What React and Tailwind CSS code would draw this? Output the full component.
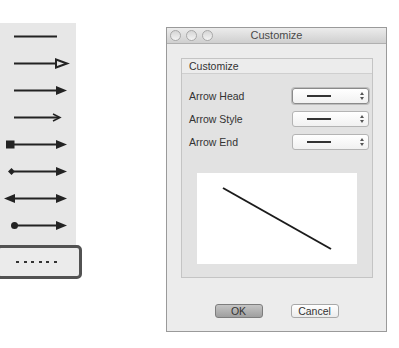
import { Fragment } from 'react'

const ink = '#232323'

function Head({ kind }) {
  if (kind === 'hollow') return <polygon points="56,27.5 67,31.5 56,35.5" fill="none" stroke={ink} strokeWidth="2" />
  if (kind === 'open') return <polyline points="53,28 60,31.5 53,35" fill="none" stroke={ink} strokeWidth="1.5" />
  if (kind === 'filled') return <polygon points="56,27 67,31.5 56,36" fill={ink} />
  return null
}

function ArrowRow({ head, tail, end = 57 }) {
  return (
    <svg width="76" height="27" viewBox="0 18 76 27" className="block">
      <line x1="14" y1="31.5" x2={end} y2="31.5" stroke={ink} strokeWidth="2" />
      <Head kind={head} />
      {tail === 'square' && <rect x="6" y="27.5" width="8.5" height="8" fill={ink} />}
      {tail === 'diamond' && <polygon points="11.5,28 15,31.5 11.5,35 8,31.5" fill={ink} />}
      {tail === 'arrow' && <polygon points="15,27 4,31.5 15,36" fill={ink} />}
      {tail === 'dot' && <circle cx="14.5" cy="31.5" r="3.5" fill={ink} />}
    </svg>
  )
}

const rows = [
  { end: 57 },
  { head: 'hollow', end: 56 },
  { head: 'filled', end: 58 },
  { head: 'open', end: 59 },
  { head: 'filled', tail: 'square', end: 58 },
  { head: 'filled', tail: 'diamond', end: 58 },
  { head: 'filled', tail: 'arrow', end: 58 },
  { head: 'filled', tail: 'dot', end: 58 },
]

function Picker({ focused }) {
  return (
    <div
      className={
        'flex h-[16px] w-[77px] items-center rounded-[3px] border bg-gradient-to-b from-white to-[#f1f1f1] ' +
        (focused ? 'border-[#8a8a8a] shadow-[0_0_0_1px_#bdbdbd]' : 'border-[#b4b4b4]')
      }
    >
      <span className="ml-[14px] h-[1.5px] w-[24px] bg-[#333]" />
      <span className="ml-auto mr-[4px] flex flex-col items-center gap-[2px]">
        <span className="h-0 w-0 border-x-[2px] border-b-[3px] border-x-transparent border-b-[#555]" />
        <span className="h-0 w-0 border-x-[2px] border-t-[3px] border-x-transparent border-t-[#555]" />
      </span>
    </div>
  )
}

export default function App() {
  return (
    <div className="flex h-[348px] w-[399px] bg-white font-['Liberation_Sans',sans-serif] text-[#333]">
      <div className="mt-[23px] w-[82px]">
        <div className="w-[76px] bg-[#e7e7e7] pb-[8px]">
          {rows.map((r, i) => (
            <Fragment key={i}>
              <ArrowRow {...r} />
            </Fragment>
          ))}
        </div>
        <div className="-ml-[4px] -mt-[2px] flex h-[34px] w-[86px] items-center rounded-[5px] border-[3px] border-[#525252] bg-[#ebebeb] pl-[17px]">
          <div className="flex gap-[4.5px]">
            {[0, 1, 2, 3, 4, 5].map((d) => (
              <span key={d} className="h-[2px] w-[3px] bg-[#333]" />
            ))}
          </div>
        </div>
      </div>

      <div className="ml-[84px] mt-[27px] flex h-[305px] w-[221px] flex-col border border-[#9a9a9a] bg-[#ececec]">
        <div className="relative flex h-[16px] items-center justify-center border-b border-[#b0b0b0] bg-gradient-to-b from-[#ececec] to-[#cfcfcf]">
          <div className="absolute left-[3px] top-[2px] flex gap-[5px]">
            {[0, 1, 2].map((c) => (
              <span key={c} className="h-[11px] w-[11px] rounded-full border border-[#a8a8a8] bg-gradient-to-b from-[#d5d5d5] to-[#f4f4f4]" />
            ))}
          </div>
          <span className="text-[11px] text-[#4a4a4a]">Customize</span>
        </div>

        <div className="ml-[14px] mr-[13px] mt-[14px] flex h-[220px] flex-col border border-[#c4c4c4] bg-[#e2e2e2]">
          <div className="flex h-[15px] items-center border-b border-[#cfcfcf] bg-[#ececec] pl-[7px] text-[10.5px] leading-none">
            Customize
          </div>
          <div className="mt-[14px] flex flex-col gap-[7px] pl-[7px] pr-[3px]">
            {['Arrow Head', 'Arrow Style', 'Arrow End'].map((l, i) => (
              <div key={l} className="flex items-center justify-between">
                <span className="text-[10.5px] leading-none">{l}</span>
                <Picker focused={i === 0} />
              </div>
            ))}
          </div>
          <div className="mx-auto mt-[23px] h-[91px] w-[160px] bg-white">
            <svg width="160" height="91" className="block">
              <line x1="26" y1="15" x2="134" y2="76" stroke="#1b1b1b" strokeWidth="2" />
            </svg>
          </div>
        </div>

        <div className="mt-[26px] flex justify-center gap-[28px] text-[10.5px] leading-none">
          <button className="h-[14px] w-[48px] rounded-[3px] border border-[#7d7d7d] bg-gradient-to-b from-[#c4c4c4] to-[#9f9f9f] text-[#333]">
            OK
          </button>
          <button className="h-[14px] w-[48px] rounded-[3px] border border-[#a8a8a8] bg-gradient-to-b from-white to-[#ececec] text-[#333]">
            Cancel
          </button>
        </div>
      </div>
    </div>
  )
}
